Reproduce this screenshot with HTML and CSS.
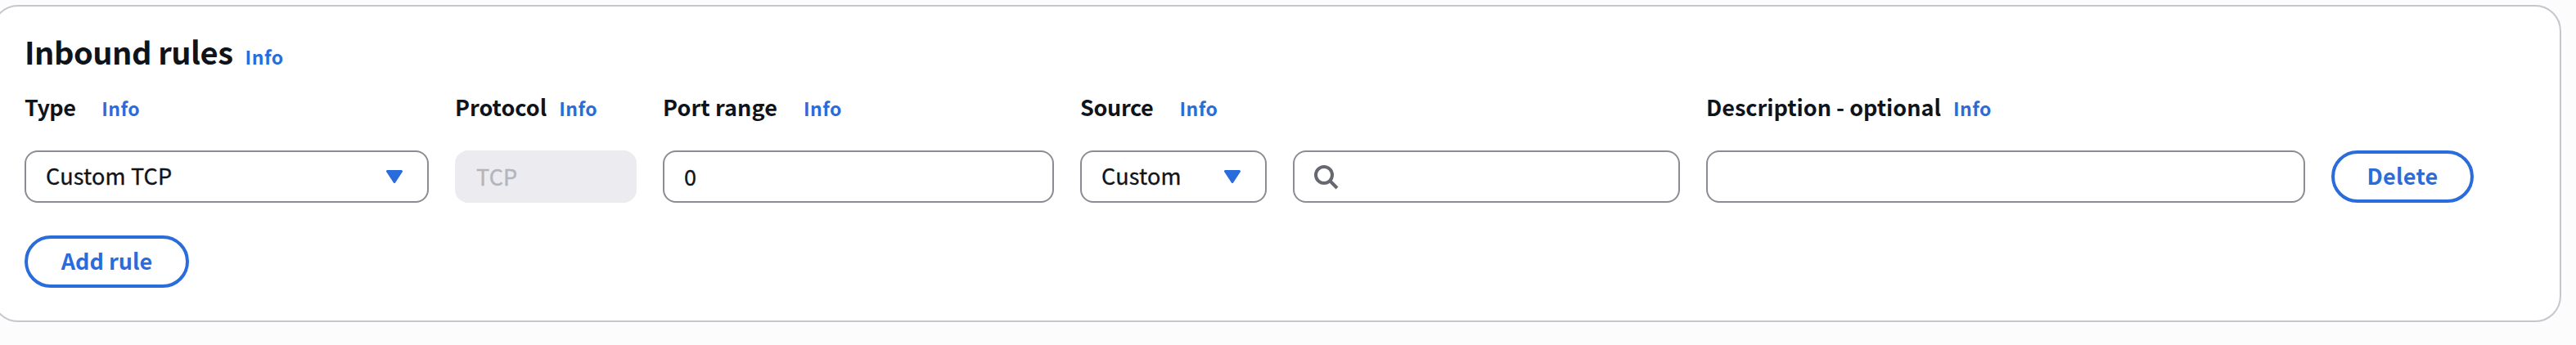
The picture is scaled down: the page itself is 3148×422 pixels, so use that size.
FILE: index.html
```html
<!DOCTYPE html>
<html lang="en">
<head>
<meta charset="utf-8">
<title>Inbound rules</title>
<link rel="stylesheet" href="styles.css">
</head>
<body>
<section class="card">
  <header class="card-header">
    <h2 class="title">Inbound rules</h2>
    <a class="info">Info</a>
  </header>
  <div class="rules">
    <div class="label wide"><span class="t-type">Type</span><a class="info">Info</a></div>
    <div class="label"><span>Protocol</span><a class="info">Info</a></div>
    <div class="label wide"><span class="t-port">Port range</span><a class="info">Info</a></div>
    <div class="label wide"><span class="t-source">Source</span><a class="info">Info</a></div>
    <div class="label"><span>Description - optional</span><a class="info">Info</a></div>
    <div class="label"></div>

    <div class="field select"><span>Custom TCP</span>
      <svg class="caret" viewBox="0 0 20 16"><path d="M1.5 1.5H18.5L10 14.5Z"/></svg>
    </div>
    <div class="field disabled"><span class="t-tcp">TCP</span></div>
    <div class="field input"><span>0</span></div>
    <div class="source">
      <div class="field select"><span>Custom</span>
        <svg class="caret" viewBox="0 0 20 16"><path d="M1.5 1.5H18.5L10 14.5Z"/></svg>
      </div>
      <div class="field search">
        <svg class="glass" viewBox="0 0 32 32"><circle cx="12" cy="14" r="10"/><path d="M19 21L28 30"/></svg>
      </div>
    </div>
    <div class="field input"></div>
    <button class="button t-delete" type="button">Delete</button>
  </div>
  <button class="button add" type="button">Add rule</button>
</section>
</body>
</html>
```
FILE: styles.css
```css
* {
  box-sizing: border-box;
}

body {
  margin: 0;
  padding-top: 6px;
  height: 422px;
  overflow: hidden;
  background: #fcfcfd;
  color: #0f141a;
  font-family: "Noto Sans CJK JP", "Noto Sans", sans-serif;
  font-size: 27px;
}

.card {
  width: 3140px;
  height: 388px;
  margin-left: -10px;
  padding: 31px 38px 39px;
  background: #fff;
  border: 2px solid #c6c6cd;
  border-radius: 32px;
}

.card-header {
  display: flex;
  align-items: baseline;
  height: 48px;
  margin-bottom: 24px;
}

.title {
  margin: 0 15px 0 0;
  font-size: 38px;
  line-height: 48px;
  font-weight: 700;
  letter-spacing: -0.45px;
}

.info {
  color: #2b6cdb;
  font-size: 23px;
  line-height: 30px;
  font-weight: 700;
  letter-spacing: 0.5px;
}

.rules {
  display: grid;
  grid-template-columns: 494px 222px 478px 733px 732px 174px;
  grid-template-rows: 40px 64px;
  gap: 33px 32px;
}

.label {
  display: flex;
  align-items: baseline;
  gap: 15px;
  font-weight: 700;
  line-height: 40px;
  white-space: nowrap;
}

.wide {
  gap: 32px;
}

.t-type { letter-spacing: -0.6px; }
.t-port { letter-spacing: 0.1px; }
.t-source { letter-spacing: -0.35px; }

.field {
  display: flex;
  align-items: center;
  height: 64px;
  padding: 0 24px;
  border: 2px solid #8c8c94;
  border-radius: 16px;
  background: #fff;
  line-height: 58px;
  letter-spacing: 0.2px;
  -webkit-text-stroke: 0.35px currentColor;
}

.select {
  justify-content: space-between;
  padding: 0 30px 2px 24px;
}

.disabled {
  background: #ebebf0;
  border-color: #ebebf0;
  color: #b4b4bb;
}

.source {
  display: grid;
  grid-template-columns: 228px 473px;
  gap: 32px;
}

.caret {
  width: 20px;
  height: 16px;
  margin-top: 2px;
  fill: #2b6cdb;
  stroke: #2b6cdb;
  stroke-width: 3px;
  stroke-linejoin: round;
}

.glass {
  width: 32px;
  height: 32px;
  fill: none;
  stroke: #656871;
  stroke-width: 4px;
}

.button {
  display: block;
  width: 174px;
  height: 64px;
  padding: 0 0 2px;
  border: 4px solid #2b6cdb;
  border-radius: 32px;
  background: #fff;
  color: #2b6cdb;
  font: inherit;
  font-weight: 700;
  line-height: 54px;
}

.t-delete { letter-spacing: 0.25px; }

.add {
  width: 201px;
  margin-top: 40px;
}
```
